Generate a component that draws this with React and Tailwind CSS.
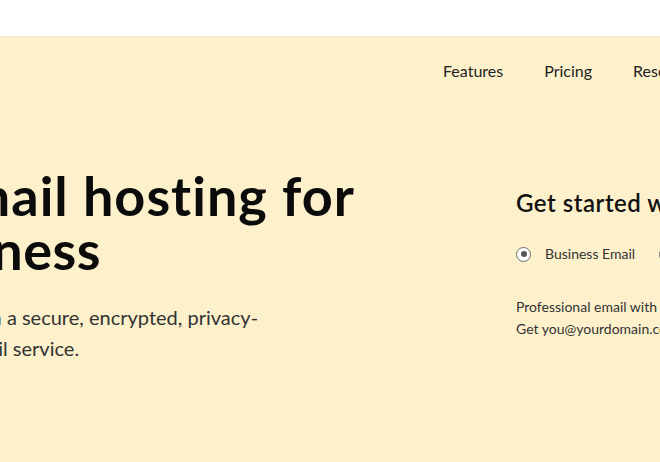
import { useState } from 'react';

const NAV = ['Features', 'Pricing', 'Resources', 'Support'];

const Radio = ({ checked, label, onClick }) => (
  <button onClick={onClick} className="flex items-center gap-[14px] shrink-0">
    <span className="w-[15px] h-[15px] rounded-full border-[1.5px] border-[#6b6b6b] bg-white flex items-center justify-center">
      {checked && <span className="w-[6px] h-[6px] rounded-full bg-[#555]" />}
    </span>
    <span className="text-[14px] leading-[20px] text-[#333]">{label}</span>
  </button>
);

export default function App() {
  const [plan, setPlan] = useState('business');

  return (
    <div className="w-[660px] h-[462px] overflow-hidden bg-white font-['Lato',sans-serif] text-[#0b0b0b]">
      {/* top strip */}
      <div className="h-[37px] bg-white border-b border-[#f3e7c9]" />

      <div className="h-[425px] bg-[#fdf1cc]">
        <nav className="flex gap-[41px] pl-[443px] pt-[24px] whitespace-nowrap">
          {NAV.map((item) => (
            <a key={item} href="#" className="text-[16px] leading-[20px] text-[#222] shrink-0">
              {item}
            </a>
          ))}
        </nav>

        <div className="flex mt-[88px]">
          {/* left column */}
          <div className="w-[516px] shrink-0">
            <h1 className="text-[54px] leading-[54px] font-bold tracking-[0.5px] whitespace-nowrap">
              <span className="block ml-[-248px] tracking-[1px]">Secure email hosting for</span>
              <span className="block ml-[-232px]">your business</span>
            </h1>
            <p className="mt-[25px] text-[20px] leading-[31px] text-[#333] whitespace-nowrap">
              <span className="block ml-[-230px]">Protect your business with a secure, encrypted, privacy-</span>
              <span className="block ml-[-113px]">focused email service.</span>
            </p>
          </div>

          {/* right column */}
          <div className="shrink-0 pt-[20px] whitespace-nowrap">
            <h2 className="text-[24px] leading-[28px] font-semibold tracking-[0.5px] text-[#111]">
              Get started with your domain
            </h2>
            <div className="flex gap-[24px] mt-[27px]">
              <Radio checked={plan === 'business'} label="Business Email" onClick={() => setPlan('business')} />
              <Radio checked={plan === 'personal'} label="Personal Email" onClick={() => setPlan('personal')} />
            </div>
            <div className="mt-[32px] text-[14px] leading-[22px] text-[#333]">
              <p>Professional email with your own domain.</p>
              <p>Get you@yourdomain.com for your team.</p>
            </div>
          </div>
        </div>
      </div>
    </div>
  );
}
